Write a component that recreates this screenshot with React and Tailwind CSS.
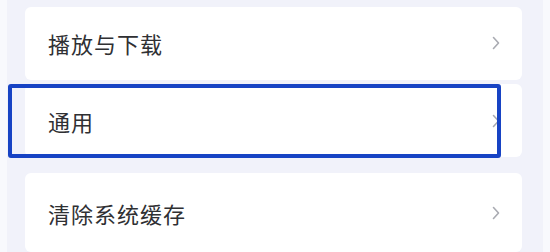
import React from 'react';

const Chevron = () => (
    <svg width="8" height="14" viewBox="0 0 8 14" fill="none" className="shrink-0">
        <path d="M1.5 1.5 L6.5 7 L1.5 12.5" stroke="#a9abb2" strokeWidth="1.6" strokeLinecap="round" strokeLinejoin="round" />
    </svg>
);

const Row = ({ label, className = '', children }) => (
    <div className={`relative flex items-center justify-between bg-white rounded-md pl-[23px] pr-[22px] ${className}`}>
        <span className="text-[22px] leading-none text-[#2f3033] tracking-[1px]">{label}</span>
        <Chevron />
        {children}
    </div>
);

const App = () => {
    return (
        <div
            className="w-[550px] h-[252px] overflow-hidden bg-[#f1f2fa] flex"
            style={{ fontFamily: '"Noto Sans CJK SC", "Noto Sans", sans-serif' }}
        >
            <div className="w-[7px] bg-[#f8f9fd]" />
            <div className="flex-1 flex flex-col pl-[18px] pr-[21px] pt-[7px]">
                <Row label="播放与下载" className="h-[74px]" />
                <Row label="通用" className="h-[75px] mt-[4px]">
                    <div className="absolute -left-[17px] right-[21px] top-0 -bottom-[1px] border-4 border-[#1743c4] rounded-[3px]" />
                </Row>
                <Row label="清除系统缓存" className="h-[80px] mt-[16px]" />
            </div>
            <div className="w-[7px] bg-[#f8f9fd]" />
        </div>
    );
};

export default App;
